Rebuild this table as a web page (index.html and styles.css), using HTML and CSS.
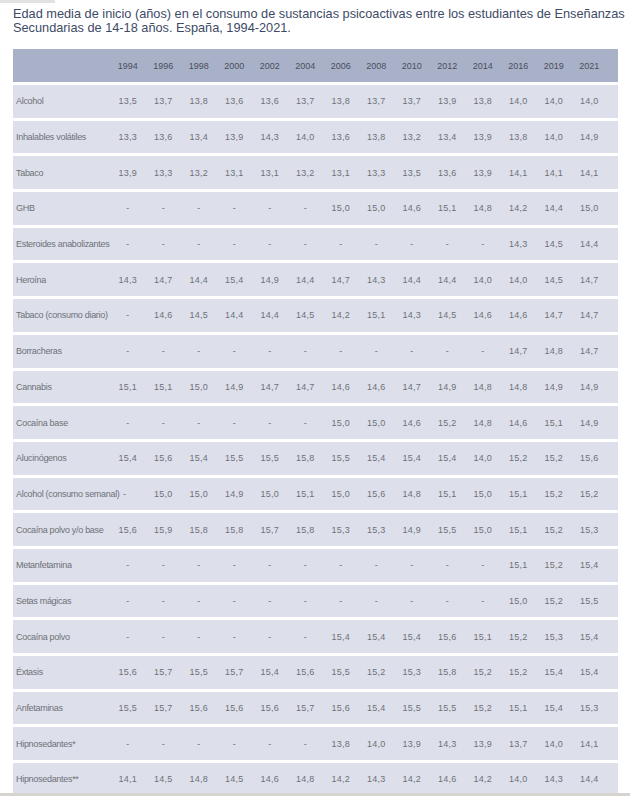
FILE: index.html
```html
<!DOCTYPE html>
<html lang="es">
<head>
<meta charset="utf-8">
<title>Edad media de inicio</title>
<link rel="stylesheet" href="styles.css">
</head>
<body>
<div class="page">
  <div class="corner"></div>
  <h1 class="title">Edad media de inicio (años) en el consumo de sustancias psicoactivas entre los estudiantes de Enseñanzas<br>Secundarias de 14-18 años. España, 1994-2021.</h1>
  <div class="table">
    <div class="row head"><span class="label"></span><span>1994</span><span>1996</span><span>1998</span><span>2000</span><span>2002</span><span>2004</span><span>2006</span><span>2008</span><span>2010</span><span>2012</span><span>2014</span><span>2016</span><span>2019</span><span>2021</span></div>
    <div class="row"><span class="label">Alcohol</span><span>13,5</span><span>13,7</span><span>13,8</span><span>13,6</span><span>13,6</span><span>13,7</span><span>13,8</span><span>13,7</span><span>13,7</span><span>13,9</span><span>13,8</span><span>14,0</span><span>14,0</span><span>14,0</span></div>
    <div class="row"><span class="label">Inhalables volátiles</span><span>13,3</span><span>13,6</span><span>13,4</span><span>13,9</span><span>14,3</span><span>14,0</span><span>13,6</span><span>13,8</span><span>13,2</span><span>13,4</span><span>13,9</span><span>13,8</span><span>14,0</span><span>14,9</span></div>
    <div class="row"><span class="label">Tabaco</span><span>13,9</span><span>13,3</span><span>13,2</span><span>13,1</span><span>13,1</span><span>13,2</span><span>13,1</span><span>13,3</span><span>13,5</span><span>13,6</span><span>13,9</span><span>14,1</span><span>14,1</span><span>14,1</span></div>
    <div class="row"><span class="label">GHB</span><span>-</span><span>-</span><span>-</span><span>-</span><span>-</span><span>-</span><span>15,0</span><span>15,0</span><span>14,6</span><span>15,1</span><span>14,8</span><span>14,2</span><span>14,4</span><span>15,0</span></div>
    <div class="row"><span class="label">Esteroides anabolizantes</span><span>-</span><span>-</span><span>-</span><span>-</span><span>-</span><span>-</span><span>-</span><span>-</span><span>-</span><span>-</span><span>-</span><span>14,3</span><span>14,5</span><span>14,4</span></div>
    <div class="row"><span class="label">Heroína</span><span>14,3</span><span>14,7</span><span>14,4</span><span>15,4</span><span>14,9</span><span>14,4</span><span>14,7</span><span>14,3</span><span>14,4</span><span>14,4</span><span>14,0</span><span>14,0</span><span>14,5</span><span>14,7</span></div>
    <div class="row"><span class="label">Tabaco (consumo diario)</span><span>-</span><span>14,6</span><span>14,5</span><span>14,4</span><span>14,4</span><span>14,5</span><span>14,2</span><span>15,1</span><span>14,3</span><span>14,5</span><span>14,6</span><span>14,6</span><span>14,7</span><span>14,7</span></div>
    <div class="row"><span class="label">Borracheras</span><span>-</span><span>-</span><span>-</span><span>-</span><span>-</span><span>-</span><span>-</span><span>-</span><span>-</span><span>-</span><span>-</span><span>14,7</span><span>14,8</span><span>14,7</span></div>
    <div class="row"><span class="label">Cannabis</span><span>15,1</span><span>15,1</span><span>15,0</span><span>14,9</span><span>14,7</span><span>14,7</span><span>14,6</span><span>14,6</span><span>14,7</span><span>14,9</span><span>14,8</span><span>14,8</span><span>14,9</span><span>14,9</span></div>
    <div class="row"><span class="label">Cocaína base</span><span>-</span><span>-</span><span>-</span><span>-</span><span>-</span><span>-</span><span>15,0</span><span>15,0</span><span>14,6</span><span>15,2</span><span>14,8</span><span>14,6</span><span>15,1</span><span>14,9</span></div>
    <div class="row"><span class="label">Alucinógenos</span><span>15,4</span><span>15,6</span><span>15,4</span><span>15,5</span><span>15,5</span><span>15,8</span><span>15,5</span><span>15,4</span><span>15,4</span><span>15,4</span><span>14,0</span><span>15,2</span><span>15,2</span><span>15,6</span></div>
    <div class="row"><span class="label">Alcohol (consumo semanal)</span><span class="tight">-</span><span>15,0</span><span>15,0</span><span>14,9</span><span>15,0</span><span>15,1</span><span>15,0</span><span>15,6</span><span>14,8</span><span>15,1</span><span>15,0</span><span>15,1</span><span>15,2</span><span>15,2</span></div>
    <div class="row"><span class="label">Cocaína polvo y/o base</span><span>15,6</span><span>15,9</span><span>15,8</span><span>15,8</span><span>15,7</span><span>15,8</span><span>15,3</span><span>15,3</span><span>14,9</span><span>15,5</span><span>15,0</span><span>15,1</span><span>15,2</span><span>15,3</span></div>
    <div class="row"><span class="label">Metanfetamina</span><span>-</span><span>-</span><span>-</span><span>-</span><span>-</span><span>-</span><span>-</span><span>-</span><span>-</span><span>-</span><span>-</span><span>15,1</span><span>15,2</span><span>15,4</span></div>
    <div class="row"><span class="label">Setas mágicas</span><span>-</span><span>-</span><span>-</span><span>-</span><span>-</span><span>-</span><span>-</span><span>-</span><span>-</span><span>-</span><span>-</span><span>15,0</span><span>15,2</span><span>15,5</span></div>
    <div class="row"><span class="label">Cocaína polvo</span><span>-</span><span>-</span><span>-</span><span>-</span><span>-</span><span>-</span><span>15,4</span><span>15,4</span><span>15,4</span><span>15,6</span><span>15,1</span><span>15,2</span><span>15,3</span><span>15,4</span></div>
    <div class="row"><span class="label">Éxtasis</span><span>15,6</span><span>15,7</span><span>15,5</span><span>15,7</span><span>15,4</span><span>15,6</span><span>15,5</span><span>15,2</span><span>15,3</span><span>15,8</span><span>15,2</span><span>15,2</span><span>15,4</span><span>15,4</span></div>
    <div class="row"><span class="label">Anfetaminas</span><span>15,5</span><span>15,7</span><span>15,6</span><span>15,6</span><span>15,6</span><span>15,7</span><span>15,6</span><span>15,4</span><span>15,5</span><span>15,5</span><span>15,2</span><span>15,1</span><span>15,4</span><span>15,3</span></div>
    <div class="row"><span class="label">Hipnosedantes*</span><span>-</span><span>-</span><span>-</span><span>-</span><span>-</span><span>-</span><span>13,8</span><span>14,0</span><span>13,9</span><span>14,3</span><span>13,9</span><span>13,7</span><span>14,0</span><span>14,1</span></div>
    <div class="row"><span class="label">Hipnosedantes**</span><span>14,1</span><span>14,5</span><span>14,8</span><span>14,5</span><span>14,6</span><span>14,8</span><span>14,2</span><span>14,3</span><span>14,2</span><span>14,6</span><span>14,2</span><span>14,0</span><span>14,3</span><span>14,4</span></div>
  </div>
  <div class="bottom"></div>
</div>
</body>
</html>
```
FILE: styles.css
```css
html, body {
  margin: 0;
  padding: 0;
  background: #ffffff;
}
.page {
  position: relative;
  width: 630px;
  height: 796px;
  overflow: hidden;
  font-family: "Liberation Sans", Arial, sans-serif;
}
.corner {
  position: absolute;
  left: 0;
  top: 0;
  width: 55px;
  height: 3px;
  background: #e2e2e4;
}
.title {
  margin: 0;
  padding: 7px 0 0 13px;
  font-size: 12.75px;
  line-height: 14px;
  font-weight: normal;
  color: #3d4a66;
  white-space: nowrap;
}
.table {
  margin: 14px 0 0 13px;
  width: 605px;
  display: flex;
  flex-direction: column;
  gap: 3px;
}
.row {
  display: grid;
  grid-template-columns: 97px repeat(14, 35.5px) 11px;
  height: 32.7px;
  flex: none;
  align-items: center;
  background: #dde0eb;
  font-size: 9px;
  color: #6e7077;
  letter-spacing: 0.2px;
}
.row span {
  text-align: center;
  white-space: nowrap;
}
.row .label {
  text-align: left;
  padding-left: 3px;
  letter-spacing: -0.3px;
}
.row .tight {
  text-align: left;
  padding-left: 13px;
}
.row.head {
  background: #a9b1c9;
  color: #4a4e5a;
  height: 33px;
  letter-spacing: 0;
}
.bottom {
  position: absolute;
  left: 0;
  bottom: 0;
  width: 630px;
  height: 3px;
  background: #d7d4cf;
}
```
